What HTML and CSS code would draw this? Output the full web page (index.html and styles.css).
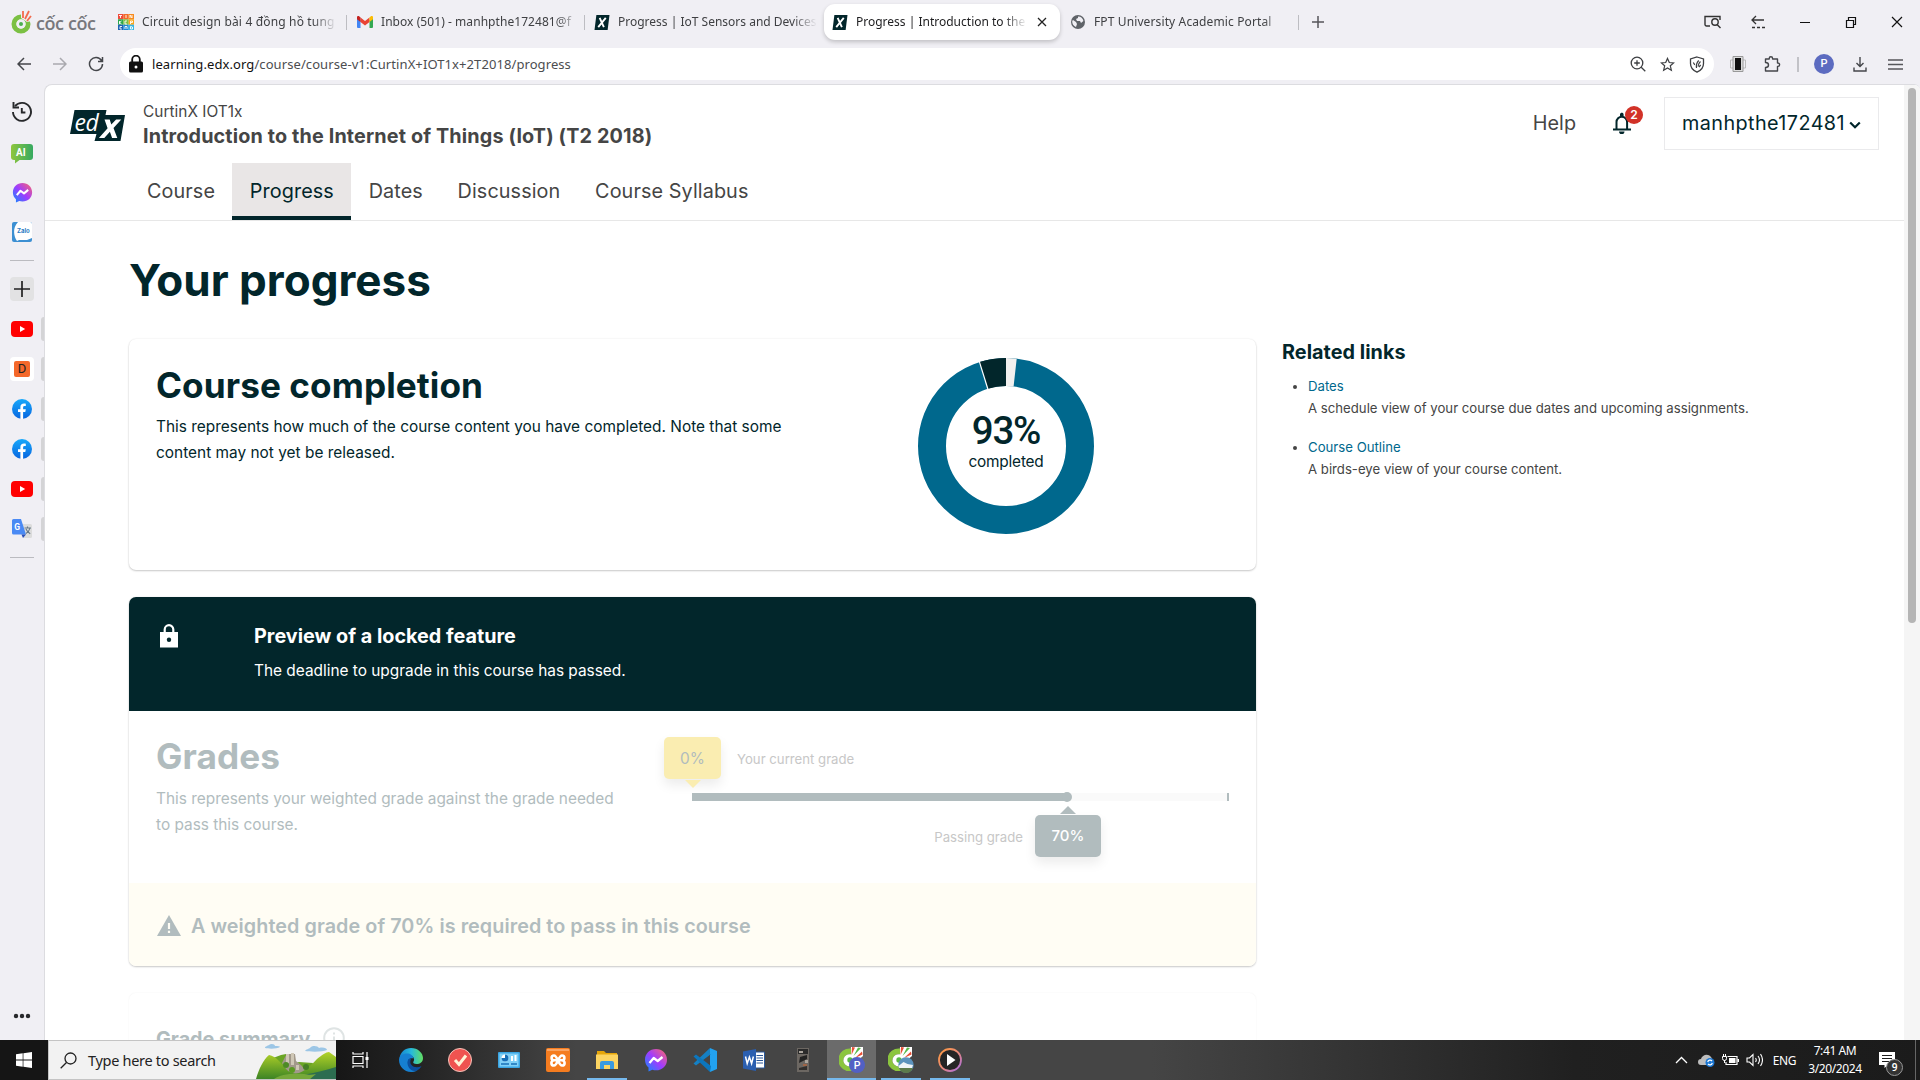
FILE: index.html
```html
<!DOCTYPE html>
<html lang="en">
<head>
<meta charset="utf-8">
<title>Progress | Introduction to the Internet of Things</title>
<link rel="stylesheet" href="styles.css">
</head>
<body>
<svg class="defs" width="0" height="0">
  <defs>
    <linearGradient id="msg" x1="0" y1="1" x2="1" y2="0"><stop offset="0" stop-color="#0a8dff"/><stop offset=".5" stop-color="#a03bff"/><stop offset="1" stop-color="#ff6968"/></linearGradient>
    <linearGradient id="fb" x1="0" y1="0" x2="0" y2="1"><stop offset="0" stop-color="#18a8fa"/><stop offset="1" stop-color="#0866e0"/></linearGradient>
    <linearGradient id="ai" x1="0" y1="0" x2="1" y2="0"><stop offset="0" stop-color="#8fc63d"/><stop offset="1" stop-color="#35a961"/></linearGradient>
    <linearGradient id="edge" x1="0" y1="0" x2="1" y2="0"><stop offset="0" stop-color="#1583cf"/><stop offset=".5" stop-color="#27b9dc"/><stop offset="1" stop-color="#62df62"/></linearGradient>
    <linearGradient id="hill" x1="0" y1="0" x2="0" y2="1"><stop offset="0" stop-color="#b4d327"/><stop offset="1" stop-color="#3c8425"/></linearGradient>
    <linearGradient id="play" x1="0" y1="0" x2="1" y2="1"><stop offset="0" stop-color="#ff9a3c"/><stop offset=".5" stop-color="#e98a78"/><stop offset="1" stop-color="#a66be8"/></linearGradient>
    <symbol id="i-msg" viewBox="0 0 24 24"><path fill="url(#msg)" d="M12 1C5.700 1 1 5.600 1 11.700c0 3.200 1.300 6 3.500 7.900V23.500l3.800-1.700c1.200.4 2.400.5 3.700.5 6.300 0 11-4.500 11-10.600S18.300 1 12 1z"/><path d="M5.500 15l4.200-5 4 3 4.800-4" fill="none" stroke="#fff" stroke-width="2.300" stroke-linejoin="round"/></symbol>
    <symbol id="i-yt" viewBox="0 0 22 16"><rect width="22" height="16" rx="4" fill="#f00"/><path d="M9 5l5.200 3L9 11z" fill="#fff"/></symbol>
    <symbol id="i-fb" viewBox="0 0 20 20"><circle cx="10" cy="10" r="10" fill="url(#fb)"/><path fill="#fff" d="M8.400 20v-7H6v-2.800h2.400V8.300c0-2.600 1.300-3.800 3.600-3.800.8 0 1.500.1 1.800.2v2.400h-1.200c-1.200 0-1.500.6-1.500 1.500v1.600h2.700L13.300 13h-2.200v7z"/></symbol>
    <symbol id="i-edxtab" viewBox="0 0 16 16"><path fill="#02262b" d="M2 0h14l-2 16H0z"/><path d="M5.500 3L10 13M12 3L4 13" stroke="#fff" stroke-width="2" fill="none"/></symbol>
    <symbol id="i-coc" viewBox="0 0 24 24"><path d="M12 0h12v9l-6 5-7-1z" fill="#fff"/><path d="M12 1.500a11.500 11.500 0 1 0 10 14h-6a6 6 0 1 1-4-8z" fill="#8bc53f"/><path d="M12 7.500a6 6 0 1 0 4 8l-2-3z" fill="#fff"/><circle cx="11" cy="13" r="2.700" fill="#59b947"/><path d="M12.500 8L13 0l3 .5z" fill="#e94f35"/><path d="M14.500 9L19 .5l3 .5z" fill="#59b947"/><path d="M16 11l7-6.500.5 3z" fill="#e94f35"/></symbol>
  </defs>
</svg>

<div class="screen">
  <div class="tabstrip">
    <div class="brand">
      <svg width="21" height="25" viewBox="0 0 21 25"><circle cx="10" cy="15" r="7" fill="none" stroke="#7bc043" stroke-width="5"/><circle cx="10" cy="15" r="4.700" fill="#f0eff4"/><circle cx="10" cy="15" r="2" fill="#4caf50"/><path d="M10 9V0h11v12l-5 1z" fill="#f0eff4"/><path d="M12 9V2M14 10l4-8M16 12l4-5" stroke="#f26b4e" stroke-width="1.800"/></svg>
      <span class="brand-name">cốc cốc</span>
    </div>
    <div class="tab tab-1">
      <svg width="16" height="16" viewBox="0 0 16 16"><path fill="#ef4b3c" d="M0 0h5.300v5.300H0z"/><path fill="#f26a2a" d="M5.300 0h5.400v5.300H5.300z"/><path fill="#f78b1f" d="M10.700 0H16v5.300h-5.300z"/><path fill="#2ba84a" d="M0 5.300h5.300v5.400H0z"/><path fill="#7cc142" d="M5.300 5.300h5.400v5.400H5.300z"/><path fill="#f9a51a" d="M10.700 5.300H16v5.400h-5.300z"/><path fill="#1c62b3" d="M0 10.700h5.300V16H0z"/><path fill="#1c87d3" d="M5.300 10.700h5.400V16H5.300z"/><path fill="#35b5e5" d="M10.700 10.700H16V16h-5.300z"/><path d="M1 1.500h3M2.500 1.500V4M8 1v3M12 4V1l2 3V1M1.500 7v3M3.500 7l-2 1.500 2 1.500M9 7H7v3h2M12.500 10V7h2v1.500h-2M4 12.500H2v2.500h2M7 15v-2.500h2V15M12.500 12.500v2.500h2v-2z" stroke="#fff" stroke-width=".9" fill="none"/></svg>
      <span class="tab-text">Circuit design bài 4 đồng hồ tung</span>
    </div>
    <div class="tab tab-2">
      <svg width="16" height="12" viewBox="0 0 16 12"><path fill="#4285f4" d="M0 1.500L3.500 4v8H1a1 1 0 0 1-1-1z"/><path fill="#34a853" d="M16 1.500L12.500 4v8H15a1 1 0 0 0 1-1z"/><path fill="#ea4335" d="M3.500 6V1.500L8 5l4.500-3.500V6L8 9.500z"/><path fill="#c5221f" d="M0 2.500V1.300C0 0 1.500-.3 2.400.5l1.100 1V6L0 3.300z"/><path fill="#fbbc04" d="M16 2.500V1.300c0-1.300-1.500-1.600-2.400-.8l-1.100 1V6L16 3.300z"/></svg>
      <span class="tab-text">Inbox (501) - manhpthe172481@f</span>
    </div>
    <div class="tab tab-3">
      <svg width="16" height="15"><use href="#i-edxtab"/></svg>
      <span class="tab-text">Progress | IoT Sensors and Devices</span>
    </div>
    <div class="tab tab-active">
      <svg width="16" height="15"><use href="#i-edxtab"/></svg>
      <span class="tab-text">Progress | Introduction to the</span>
      <svg class="tab-close" width="10" height="10" viewBox="0 0 10 10"><path d="M1 1l8 8M9 1L1 9" stroke="#222" stroke-width="1.300"/></svg>
    </div>
    <div class="tab tab-5">
      <svg width="14" height="14" viewBox="0 0 14 14"><circle cx="7" cy="7" r="7" fill="#5f6368"/><path d="M2 5l3 2 1 2-1 3c-2.500-1-4-3-3.800-6zM7 1.500c3 0 5 2 5.400 4.500L10 8 9 6H6l-1-2 2-1z" fill="#f0eff4"/></svg>
      <span class="tab-text">FPT University Academic Portal</span>
    </div>
    <svg class="newtab" width="12" height="12" viewBox="0 0 12 12"><path d="M6 0v12M0 6h12" stroke="#55565a" stroke-width="1.500"/></svg>
    <div class="window-buttons">
      <svg width="18" height="14" viewBox="0 0 18 14"><path d="M6 11H2.500A1.500 1.500 0 0 1 1 9.500v-8h15V5" fill="none" stroke="#333" stroke-width="1.400"/><circle cx="11" cy="7" r="3.200" fill="none" stroke="#333" stroke-width="1.400"/><path d="M13 9.500l3.500 3.500" stroke="#333" stroke-width="1.400"/></svg>
      <svg width="14" height="14" viewBox="0 0 14 14"><path d="M1 5h12M5 1L1 5l4 4" fill="none" stroke="#333" stroke-width="1.300"/><path d="M1 12.500h13" stroke="#333" stroke-width="1.300" stroke-dasharray="3 2"/></svg>
      <svg width="12" height="12" viewBox="0 0 12 12"><path d="M1 6.500h10" stroke="#111"/></svg>
      <svg width="12" height="12" viewBox="0 0 12 12"><path d="M1.500 4.500h7v7h-7zM3.500 4V1.500h7v7H9" fill="none" stroke="#111" stroke-width="1.200"/></svg>
      <svg width="12" height="12" viewBox="0 0 12 12"><path d="M1 1l10 10M11 1L1 11" stroke="#111" stroke-width="1.200"/></svg>
    </div>
  </div>

  <div class="toolbar">
    <div class="nav-icons">
      <svg width="14" height="14" viewBox="0 0 14 14"><path d="M14 7H1M7 1L1 7l6 6" fill="none" stroke="#44464a" stroke-width="1.500"/></svg>
      <svg width="14" height="14" viewBox="0 0 14 14"><path d="M0 7h13M7 1l6 6-6 6" fill="none" stroke="#a9a9ae" stroke-width="1.500"/></svg>
      <svg width="16" height="16" viewBox="0 0 16 16"><path d="M13.500 4.500A6.500 6.500 0 1 0 14.500 8M14.500 1v4.500H10" fill="none" stroke="#44464a" stroke-width="1.500"/></svg>
    </div>
    <div class="omnibox">
      <svg width="14" height="18" viewBox="0 0 14 18"><rect y="6.500" width="14" height="11" rx="1.500" fill="#111"/><path d="M3.200 7V4.500a3.800 3.800 0 0 1 7.600 0V7" fill="none" stroke="#111" stroke-width="1.800"/><circle cx="7" cy="12" r="1.500" fill="#fff"/></svg>
      <span class="url"><b>learning.edx.org</b>/course/course-v1:CurtinX+IOT1x+2T2018/progress</span>
      <div class="omni-actions">
        <svg width="16" height="16" viewBox="0 0 16 16" fill="none" stroke="#3d3f42" stroke-width="1.300"><circle cx="7" cy="7" r="5.800"/><path d="M11.200 11.200L15.300 15.300M7 4.200v5.600M4.200 7h5.600"/></svg>
        <svg width="15" height="15" viewBox="0 0 16 16"><path d="M8 1.500l1.900 4.400 4.700.4-3.600 3.100 1.100 4.700L8 11.600l-4.100 2.500L5 9.400 1.400 6.300l4.700-.4z" fill="none" stroke="#3d3f42" stroke-width="1.300"/></svg>
        <svg width="16" height="17" viewBox="0 0 16 17"><path d="M8 1l6.500 2v4.500c0 4-2.500 7-6.500 8.700-4-1.700-6.500-4.700-6.500-8.700V3z" fill="none" stroke="#3d3f42" stroke-width="1.300"/><path d="M4.300 6.500l1.500 2.300M7.500 12c-.5-3 .3-5.500 2.200-7.500M9 10.500c.2-2 1-3.700 2.500-5M10 11l1.700-2" stroke="#3d3f42" stroke-width="1.200" fill="none"/></svg>
      </div>
    </div>
    <div class="ext-icons">
      <svg width="16" height="16" viewBox="0 0 16 16"><path d="M.5 4v8h15V4z" fill="none" stroke="#bbb"/><path d="M3 .5h10v15H3z" fill="#ddd" stroke="#999"/><path d="M5 2h6v12H5z" fill="#111"/></svg>
      <svg width="17" height="16" viewBox="0 0 17 16"><path d="M1.500 3h3.700V2.500a1.700 1.700 0 0 1 3.400 0V3h4.900v4h.4a1.700 1.700 0 0 1 0 3.400h-.4V15h-12v-3.500c2.200 0 3-1.200 3-2.500s-.8-2.500-3-2.500z" fill="none" stroke="#44464a" stroke-width="1.400" stroke-linejoin="round"/></svg>
      <i class="bar"></i>
      <span class="avatar">P</span>
      <svg width="14" height="15" viewBox="0 0 14 15"><path d="M7 0v9M3.500 6L7 9.500 10.500 6M1 10.500V14h12v-3.500" fill="none" stroke="#44464a" stroke-width="1.400"/></svg>
      <svg width="15" height="11" viewBox="0 0 15 11"><path d="M0 1h15M0 5.500h15M0 10h15" stroke="#55565a" stroke-width="1.400"/></svg>
    </div>
  </div>

  <div class="workspace">
    <div class="side">
      <div class="side-item"><svg width="22" height="22" viewBox="0 0 22 22" fill="none" stroke="#27282b" stroke-width="1.900"><path d="M4 5.200A9 9 0 1 1 2 11"/><path d="M2.500 1v5.500H8"/><path d="M10.800 7v4.500h3.600"/></svg></div>
      <div class="side-item ai"><svg width="22" height="20" viewBox="0 0 22 20"><path fill="url(#ai)" d="M3 0h16a3 3 0 0 1 3 3v10a3 3 0 0 1-3 3H8.500L4 19.500V16H3a3 3 0 0 1-3-3V3a3 3 0 0 1 3-3z"/><text x="5" y="12" class="ai-label">AI</text></svg></div>
      <div class="side-item"><svg width="21" height="21"><use href="#i-msg"/></svg></div>
      <div class="side-item"><svg width="20" height="20" viewBox="0 0 20 20"><rect width="20" height="20" rx="2" fill="#3c8fd2"/><path d="M6 0h12a2 2 0 0 1 2 2v14l-5 2H7l-2 1C2 15 0 6 6 0z" fill="#fff"/><text x="5" y="11" class="zalo-label">Zalo</text></svg></div>
      <hr class="side-line">
      <div class="side-item add"><span class="plus-box"><svg width="16" height="16" viewBox="0 0 16 16"><path d="M8 0v16M0 8h16" stroke="#222" stroke-width="1.700"/></svg></span></div>
      <div class="side-item open"><svg width="22" height="16"><use href="#i-yt"/></svg></div>
      <div class="side-item open"><span class="d-tile"><span>D</span></span></div>
      <div class="side-item open"><svg width="20" height="20"><use href="#i-fb"/></svg></div>
      <div class="side-item open"><svg width="20" height="20"><use href="#i-fb"/></svg></div>
      <div class="side-item open"><svg width="22" height="16"><use href="#i-yt"/></svg></div>
      <div class="side-item open"><svg width="20" height="20" viewBox="0 0 20 20"><path d="M8 5h10.500a1.500 1.500 0 0 1 1.500 1.500v11a1.500 1.500 0 0 1-1.500 1.500H12z" fill="#dcdcdc"/><path d="M1.500 0H9l5 15.500H1.500A1.500 1.500 0 0 1 0 14V1.500A1.500 1.500 0 0 1 1.500 0z" fill="#4a8af4"/><path d="M9.500 15.500H14L11 19z" fill="#2a4fb5"/><path d="M12.500 9H19M15.500 7.500V9M18 9c-.5 2.500-2 4-4 5.500M14 10c.8 2 2.200 3.500 4.200 4.800" stroke="#687a88" stroke-width="1.100" fill="none"/><text x="2.200" y="11" class="g-label">G</text></svg></div>
      <hr class="side-line last">
      <svg class="dots" width="18" height="6" viewBox="0 0 18 6"><circle cx="3" cy="3" r="2.200"/><circle cx="9" cy="3" r="2.200"/><circle cx="15" cy="3" r="2.200"/></svg>
    </div>

    <div class="page">
      <div class="viewport">
        <header class="site-header">
          <div class="header-top">
            <svg class="logo" width="55" height="31" viewBox="0 0 55 31"><path fill="#02262b" d="M4.500 0H36.500L35.500 5H55L50.500 31H24.500L26.500 24H0z"/><text x="4.500" y="21" class="logo-ed">ed</text><path d="M34.500 9.500h5.200l1.600 5 4.800-5h5.200L43.500 18l3.800 10h-5.200l-2.200-6.200-5.600 6.200h-5.400l8.700-9.800z" fill="#fff"/></svg>
            <div class="course-id"><span class="org">CurtinX IOT1x</span><span class="course-name">Introduction to the Internet of Things (IoT) (T2 2018)</span></div>
            <span class="help">Help</span>
            <span class="bell"><svg width="20" height="22" viewBox="0 0 20 22"><path d="M4.500 17V10a5.300 5.300 0 0 1 10.600 0v7M1 17.500h18" fill="none" stroke="#02262b" stroke-width="2"/><path d="M8 2.500C8 0 11.600 0 11.600 2.500v2H8zM7 19.500h5.500a2.700 2.700 0 0 1-5.500 0z" fill="#02262b"/></svg><span class="badge">2</span></span>
            <span class="user"><span class="user-name">manhpthe172481</span><svg width="12" height="8" viewBox="0 0 12 8"><path d="M1.200 1.500L6 6.300l4.800-4.800" fill="none" stroke="#02262b" stroke-width="2.200"/></svg></span>
          </div>
          <nav class="course-nav"><a>Course</a><a class="current">Progress</a><a>Dates</a><a>Discussion</a><a>Course Syllabus</a></nav>
        </header>
        <main>
          <h1>Your progress</h1>
          <div class="columns">
            <div class="main-col">
              <section class="card completion">
                <div class="copy">
                  <h2>Course completion</h2>
                  <p>This represents how much of the course content you have completed. Note that some<br>content may not yet be released.</p>
                </div>
                <svg class="donut" width="178" height="178" viewBox="-89 -89 178 178">
                  <circle r="74" fill="none" stroke="#00688d" stroke-width="28"/>
                  <path d="M0-88A88 88 0 0 1 10.700-87.350L7.600-59.500A60 60 0 0 0 0-60z" fill="#f2f0ef"/>
                  <path d="M-26.500-83.900A88 88 0 0 1 0-88V-60A60 60 0 0 0-18-57.200z" fill="#02262b"/>
                  <path d="M-26.800-84.900L-18-56.500" stroke="#fff" stroke-width="1.200"/>
                  <text class="pct" x="0" y="-2" text-anchor="middle">93%</text>
                  <text class="pct-label" y="21" text-anchor="middle">completed</text>
                </svg>
              </section>
              <section class="card grades">
                <div class="locked">
                  <svg width="18" height="24" viewBox="0 0 18 24"><path d="M0 8h18v15.500H0z" fill="#fff"/><path d="M4.700 8.500V5.500a4.300 4.300 0 0 1 8.600 0v3" fill="none" stroke="#fff" stroke-width="2.200"/><circle cx="9" cy="15.700" r="2.200" fill="#02262b"/></svg>
                  <div><h3>Preview of a locked feature</h3><p>The deadline to upgrade in this course has passed.</p></div>
                </div>
                <div class="grade-body">
                  <div class="copy">
                    <h2>Grades</h2>
                    <p>This represents your weighted grade against the grade needed<br>to pass this course.</p>
                  </div>
                  <div class="chart">
                    <div class="chart-top"><span class="bubble current-bubble">0%</span><span class="chart-label">Your current grade</span></div>
                    <div class="track"><div class="passing" style="width:70%"></div></div>
                    <div class="chart-bottom"><span class="chart-label">Passing grade</span><span class="bubble pass-bubble">70%</span></div>
                  </div>
                </div>
                <div class="notice">
                  <svg width="24" height="21" viewBox="0 0 24 21"><path d="M12 0l12 21H0z" fill="#b1bcbe"/><path d="M10.900 8h2.200v6h-2.200zM10.900 15.800h2.200V18h-2.200z" fill="#fffdf4"/></svg>
                  <span>A weighted grade of 70% is required to pass in this course</span>
                </div>
              </section>
              <section class="card summary"><h3>Grade summary</h3><svg width="22" height="22" viewBox="0 0 22 22"><circle cx="11" cy="11" r="9.800" fill="none" stroke="#dfe4e4" stroke-width="2"/><path d="M10 5.500h2v2h-2zM10 9.500h2v6h-2z" fill="#dfe4e4"/></svg></section>
            </div>
            <aside class="related">
              <h3>Related links</h3>
              <ul>
                <li><a>Dates</a><p>A schedule view of your course due dates and upcoming assignments.</p></li>
                <li><a>Course Outline</a><p>A birds-eye view of your course content.</p></li>
              </ul>
            </aside>
          </div>
        </main>
      </div>
      <div class="scrollbar"><div class="thumb"></div></div>
    </div>
  </div>

  <div class="taskbar">
    <div class="start"><svg width="16" height="16" viewBox="0 0 16 16"><path fill="#fff" d="M0 2.200L6.700 1.300V7.600H0zM7.400 1.200L16 0v7.600H7.400zM0 8.400h6.700v6.300L0 13.800zM7.400 8.400H16V16l-8.600-1.200z"/></svg></div>
    <div class="search">
      <svg width="17" height="17" viewBox="0 0 17 17"><circle cx="10.500" cy="6.500" r="5.500" fill="none" stroke="#222" stroke-width="1.300"/><path d="M6.500 10.500L.7 16.300" stroke="#222" stroke-width="1.300"/></svg>
      <span>Type here to search</span>
      <svg class="scene" width="80" height="38" viewBox="0 0 80 38"><path d="M9 7c0-2 3-2 4-3 2-2 6-1 6 1 3 0 5 0 5 1-3 2-11 2-15 1zM49 10c1-2 4-2 5-3 2-3 8-2 9 0 4-1 8 0 8 2-4 2-16 2-22 1z" fill="#9cc6e6"/><path d="M17 17l8-3 5-1v8l5 2 8-2 14 1-4 12H24z" fill="#6aa524"/><path d="M26 22l3-6 2-3h8l1 7 5 4 4 5 4 4H32z" fill="#a2998b"/><path d="M30 13h3v9h-3zM35 12h3v12h-3zM40 24h3v5h-3z" fill="#cfc7b6"/><path d="M0 38C3 28 7 19 13 14c7 1 13 9 18 15 3 3 8 4 12 3 8-3 13-9 18-14 5-4 9-7 12-7l7 5v22z" fill="url(#hill)"/><path d="M24 38c14-2 36-6 56-12v12z" fill="#2c6d50"/><path d="M18 38c6-5 18-6 30-5 5 1 8 1 12 0l-6 5z" fill="#76a83a"/><circle cx="30" cy="24" r="3" fill="#4d8b25"/><circle cx="36" cy="29" r="3" fill="#5b9a22"/><circle cx="50" cy="26" r="3" fill="#467f24"/></svg>
    </div>
    <div class="apps">
      <div class="app"><svg width="17" height="16" viewBox="0 0 17 16" fill="none" stroke="#fff" stroke-width="1.200"><path d="M1 4.500h10v7H1zM1 0v2h10V0M1 16v-2h10v2M15 0v16"/><path d="M13.500 5h3v3h-3z" fill="#fff" stroke="none"/></svg></div>
      <div class="app"><svg width="24" height="24" viewBox="0 0 24 24"><path d="M.5 10C1.500 4 6 0 12 0c7 0 12 5 12 10 0 4-3 6-6.500 6-2.500 0-4-1-3-2.500 1.500-2.500 0-6-4.500-6-4 0-7 1-9.500 2.500z" fill="url(#edge)"/><path d="M0 12c0-4 4-6.500 8-6.500 3.500 0 6 2 6.500 5-6-2-8 6-2 10 3 2 5 2 6 2C16 23.500 14 24 12 24 5 24 0 18 0 12z" fill="#1680d2"/><path d="M9 12c-2 5 2 12 8 11 2.500-1 4.500-3 5.500-5-3.500 2-8 1.500-10-1C11 15.500 11 13 12 11c-1.500-.5-2.500 0-3 1z" fill="#0c4f9e"/></svg></div>
      <div class="app"><svg width="24" height="24" viewBox="0 0 24 24"><circle cx="12" cy="12" r="11.500" fill="#ef5350" stroke="#f2c6bd"/><path d="M7 12l4 4.500L18 7.500" fill="none" stroke="#fff3d6" stroke-width="3"/></svg></div>
      <div class="app"><svg width="22" height="16" viewBox="0 0 22 16"><rect width="22" height="16" rx="1" fill="#3aa5e3"/><rect x="1.500" y="1.500" width="19" height="13" fill="#7fd0f7"/><circle cx="7" cy="6" r="3.500" fill="#fff"/><path d="M7 2.500a3.500 3.500 0 1 1-3.500 3.500H7z" fill="#1870b8"/><path d="M13 4h2v5h-2zM16.500 3h2v6h-2z" fill="#fff"/><path d="M3 12h8M13 12h6" stroke="#1870b8" stroke-width="1.500"/></svg></div>
      <div class="app"><svg width="24" height="24" viewBox="0 0 24 24"><rect width="24" height="24" rx="2" fill="#f57c1f"/><path d="M1 2h22" stroke="#fbb27a" stroke-width="1.500"/><path d="M8 7.500a2.400 2.400 0 0 0 0 4.800h8a2.400 2.400 0 0 0 0-4.800c-3.500 0-4.500 10-8 10a2.600 2.600 0 0 1 0-5.200M8 7.500c3.500 0 4.500 10 8 10a2.600 2.600 0 0 0 0-5.200" fill="none" stroke="#fff" stroke-width="2.600"/></svg></div>
      <div class="app running"><svg width="22" height="18" viewBox="0 0 22 18"><path d="M1 0h7l2 2h11v16H1z" fill="#e5a50a"/><path d="M0 3.500h22V18H0z" fill="#fcd462"/><path d="M4 18v-6a2 2 0 0 1 2-2h10a2 2 0 0 1 2 2v6h-4v-4H8v4z" fill="#3a9ae0"/></svg></div>
      <div class="app"><svg width="24" height="24"><use href="#i-msg"/></svg></div>
      <div class="app"><svg width="24" height="24" viewBox="0 0 24 24"><path d="M17 0l7 3v18l-7 3z" fill="#22a2f0"/><path d="M18 6L3 17.500.5 15.500 17 0v6z" fill="#1580c4"/><path d="M18 18L3 6.500.5 8.500 17 24z" fill="#0c76bd"/></svg></div>
      <div class="app"><svg width="22" height="22" viewBox="0 0 22 22"><path d="M11 3h10.500v16H11z" fill="#fff" stroke="#2b5797"/><path d="M13.500 6.500H20M13.500 9H20M13.500 11.500H20M13.500 14H20" stroke="#2b5797"/><path d="M0 2.500L13 0v22L0 19.500z" fill="#2b5fb0"/><path d="M2.500 7.500l1.700 7 2.200-6.500 2.200 6.500 1.800-7" fill="none" stroke="#fff" stroke-width="1.500"/></svg></div>
      <div class="app"><svg width="12" height="24" viewBox="0 0 12 24"><path d="M0 0h12v24H0z" fill="#6c6762"/><path d="M1 1h10v5H1z" fill="#2b2b2b"/><path d="M3 9l7-2v4L2 15z" fill="#222"/><path d="M2 3h4v2H2zM8 12h3v3H8z" fill="#aaa49c"/><path d="M6 17h4" stroke="#d2652d"/><path d="M2 20l8-2v4H2z" fill="#312e2c"/></svg></div>
      <div class="app focused running"><svg width="26" height="26" viewBox="0 0 26 26"><use href="#i-coc" width="24" height="24"/><circle cx="18" cy="18" r="8" fill="#5260c4"/><text x="14.700" y="21.800" class="p-label">P</text></svg></div>
      <div class="app running"><svg width="26" height="26" viewBox="0 0 26 26"><use href="#i-coc" width="24" height="24"/><circle cx="18" cy="18" r="7.700" fill="#5b93bd"/><path d="M10.500 19l5-4 4 2 5.500 1-1 3H11z" fill="#eef4f7"/><path d="M11 21h14c-2 4-4 5-7 5s-6-2-7-5z" fill="#5c7b4c"/></svg></div>
      <div class="app running"><svg width="24" height="24" viewBox="0 0 24 24"><circle cx="12" cy="12" r="11" fill="#252525" stroke="url(#play)" stroke-width="1.800"/><path d="M9 6l8.500 6L9 18z" fill="#fff"/></svg></div>
    </div>
    <div class="tray">
      <svg class="t-chev" width="13" height="8" viewBox="0 0 13 8"><path d="M1 7l5.500-5.500L12 7" fill="none" stroke="#fff" stroke-width="1.300"/></svg>
      <svg class="t-cloud" width="17" height="14" viewBox="0 0 17 14"><path d="M3 12a3 3 0 0 1 0-6C4 2 10 0 13 4l2 3v5z" fill="#bdbdbd"/><circle cx="12" cy="9.500" r="4.500" fill="#1c78d4"/><path d="M9.700 9a2.500 2.500 0 0 1 4.300-1M14.300 10a2.500 2.500 0 0 1-4.300 1" stroke="#fff" fill="none" stroke-width="1.200"/></svg>
      <svg class="t-batt" width="17" height="12" viewBox="0 0 17 12"><path d="M5.500 2.500h9.500v8H4V8" fill="none" stroke="#fff" stroke-width="1.200"/><path d="M7 4h6.500v5H7zM15.500 5H17v3h-1.500z" fill="#fff"/><path d="M.5 2.500h4v2a2 2 0 0 1-4 0zM1.500 0v2M3.500 0v2M2.500 6v3" stroke="#fff" fill="none"/></svg>
      <svg class="t-vol" width="17" height="14" viewBox="0 0 17 14"><path d="M1 5h2.500L7 1.500v11L3.500 9H1zM9.500 5q1.500 2 0 4M12 3q3 4 0 8M14.500 1q4 6 0 12" fill="none" stroke="#fff" stroke-width="1.100"/></svg>
      <span class="lang">ENG</span>
      <div class="clock"><span>7:41 AM</span><span>3/20/2024</span></div>
      <div class="notif"><svg width="16" height="16" viewBox="0 0 16 16"><path d="M0 0h16v13H9l-3.500 3v-3H0z" fill="#fff"/><path d="M3 3.500h10M3 6.500h10M3 9.500h7" stroke="#1c1c1c"/></svg><span class="count">9</span></div>
      <i class="peek"></i>
    </div>
  </div>
</div>
</body>
</html>
```
FILE: styles.css
```css
* { box-sizing: border-box; }
body { margin: 0; font-family: Inter, "Liberation Sans", sans-serif; color: #02262b; overflow: hidden; }
h1, h2, h3, p, ul { margin: 0; padding: 0; }
svg { flex: none; display: block; }
.defs { position: absolute; }
.screen { width: 1920px; height: 1080px; display: flex; flex-direction: column; background: #f0eff4; }

/* tab strip */
.tabstrip { height: 44px; flex: none; display: flex; align-items: center; font: 12px "Noto Sans", "Open Sans", sans-serif; color: #3f4043; }
.brand { display: flex; align-items: center; gap: 4px; padding-left: 11px; width: 113px; }
.brand svg { margin-bottom: 2px; }
.brand-name { font: 600 18px "Open Sans", sans-serif; color: #77787c; letter-spacing: -.4px; white-space: nowrap; padding-top: 1px; }
.tab { height: 36px; display: flex; align-items: center; gap: 8px; flex: none; position: relative; }
.tab::after { content: ""; position: absolute; right: 0; top: 11px; width: 1px; height: 15px; background: #bdbdc2; }
.tab-text { flex: 1; overflow: hidden; white-space: nowrap; padding-bottom: 2px; letter-spacing: .12px; -webkit-mask-image: linear-gradient(90deg, #000 calc(100% - 24px), transparent); mask-image: linear-gradient(90deg, #000 calc(100% - 24px), transparent); }
.tab-1 { width: 234px; padding: 0 10px 0 5px; }
.tab-1 .tab-text { letter-spacing: .16px; }
.tab-2 { width: 238px; padding: 0 5px 0 10px; }
.tab-2 .tab-text { letter-spacing: .06px; }
.tab-3 { width: 239px; padding: 0 7px 0 9px; }
.tab-3 .tab-text { letter-spacing: 0; }
.tab-3::after, .tab-active::after { display: none; }
.tab-active { width: 236px; padding: 0 13px 0 8px; background: #fff; border-radius: 11px; box-shadow: 0 2px 4px rgba(0,0,0,.2); color: #1d1d1f; }
.tab-active .tab-text { letter-spacing: 0; }
.tab-close { margin-left: 2px; }
.tab-5 { width: 239px; padding: 0 12px 0 11px; }
.tab-5 .tab-text { margin-left: 1px; }
.newtab { margin-left: 13px; }
.window-buttons { margin-left: auto; display: flex; align-items: center; padding-right: 17px; gap: 34px; }
.window-buttons svg:nth-child(1) { margin-right: -5px; }

/* toolbar */
.toolbar { height: 40px; flex: none; display: flex; align-items: center; }
.nav-icons { width: 120px; display: flex; align-items: center; gap: 21.500px; padding-left: 17px; }
.omnibox { width: 1594px; height: 32px; border-radius: 16px; background: #fff; display: flex; align-items: center; padding: 0 9px; gap: 9px; }
.url { font: 13px "Noto Sans", "Open Sans", sans-serif; color: #4c4d50; letter-spacing: .085px; }
.url b { font-weight: 400; color: #111; }
.omni-actions { margin-left: auto; display: flex; align-items: center; gap: 14px; }
.ext-icons { display: flex; align-items: center; padding-left: 16px; }
.ext-icons .bar { width: 2px; height: 15px; background: #c2c2c7; margin: 0 15px 0 16px; }
.ext-icons svg:nth-child(2) { margin-left: 18px; }
.avatar { width: 20px; height: 20px; border-radius: 50%; background: #5c6bc0; color: #fff; font: 500 11px/20px Roboto, sans-serif; text-align: center; margin-right: 19px; }
.ext-icons svg:last-child { margin-left: 21px; }

/* left rail */
.workspace { flex: 1; min-height: 0; display: flex; }
.side { width: 44px; flex: none; display: flex; flex-direction: column; padding-top: 8px; }
.side-item { height: 40px; display: flex; align-items: center; justify-content: center; flex: none; position: relative; }
.side-item.ai { padding-top: 3px; }
.side-item.open::after { content: ""; position: absolute; right: 0; top: 8px; width: 3px; height: 24px; background: #d4d4d6; border-radius: 3px 0 0 3px; }
.side-line { width: 24px; height: 1px; border: 0; background: #bbbbc0; margin: 8px 10px; flex: none; }
.side-line.last { margin: 8px 10px; }
.plus-box { width: 24px; height: 24px; border-radius: 4px; background: #e2e2e3; display: grid; place-items: center; }
.d-tile { width: 24px; height: 24px; border-radius: 4px; background: #fff; display: grid; place-items: center; }
.d-tile span { width: 16px; height: 16px; border-radius: 2px; background: #f4682a; font: 13px/16px Roboto, sans-serif; text-align: center; color: #222; }
.dots { margin: auto auto 21px 13px; fill: #27282b; }
.ai-label { font: 700 10px Roboto, sans-serif; fill: #fff; }
.zalo-label { font: 700 6px Inter, sans-serif; fill: #2b7dc4; }
.g-label { font: 700 8.500px Roboto, sans-serif; fill: #fff; }
.p-label { font: 500 10.500px Roboto, sans-serif; fill: #fff; }

/* page */
.page { flex: 1; min-width: 0; display: flex; background: #fff; border-top: 1px solid #dcdce0; border-left: 1px solid #dcdce0; border-radius: 8px 6px 0 0; overflow: hidden; }
.viewport { width: 1859px; overflow: hidden; }
.scrollbar { width: 16px; background: #f5f5f5; padding: 3px 4px; }
.thumb { width: 8px; height: 535px; border-radius: 4px; background: #b5b5b5; }
.site-header { height: 136px; border-bottom: 1px solid #e7e7e7; }
.header-top { height: 78px; display: flex; align-items: center; padding: 0 25px 2px 25px; }
.logo { margin-top: 5px; }
.logo-ed { font: italic 400 23px "Open Sans", sans-serif; fill: #fff; letter-spacing: -.5px; }
.course-id { margin: 0 auto 0 18px; display: flex; flex-direction: column; color: #454545; }
.org { font-size: 15.400px; line-height: 25px; letter-spacing: .03px; }
.course-name { font-size: 19.800px; line-height: 24px; font-weight: 700; letter-spacing: .14px; }
.help { font-size: 19.800px; color: #454545; margin-right: 36px; }
.bell { position: relative; width: 20px; margin-right: 32px; }
.badge { position: absolute; left: 13px; top: -6px; width: 18px; height: 18px; border-radius: 50%; background: #d23228; color: #fff; font-size: 12px; font-weight: 600; line-height: 18px; text-align: center; }
.user { width: 215px; height: 53px; margin-top: 1px; border: 1px solid #eaeaec; display: flex; align-items: center; justify-content: center; gap: 4px; font-size: 19.800px; }
.user-name { letter-spacing: .43px; padding-bottom: 2px; }
.user svg { margin-top: 2px; }
.course-nav { display: flex; height: 57px; padding-left: 84px; font-size: 19.800px; letter-spacing: .1px; color: #454545; }
.course-nav a { padding: 0 17.400px; line-height: 56px; white-space: nowrap; }
.course-nav a:first-child { padding-left: 18px; }
.course-nav .current { background: #e9e6e6; border-bottom: 4px solid #02262b; color: #02262b; }
main { padding: 28px 0 0 84px; }
h1 { font-size: 44px; line-height: 62px; font-weight: 700; }
.columns { display: flex; gap: 26px; margin-top: 28px; align-items: flex-start; }
.main-col { width: 1127px; display: flex; flex-direction: column; gap: 27px; }
.card { border-radius: 7px; box-shadow: 0 1px 2px rgba(0,0,0,.2), 0 0 2px rgba(0,0,0,.08); background: #fff; overflow: hidden; }
h2 { font-size: 35.200px; line-height: 44px; font-weight: 700; letter-spacing: .07px; }
.copy p { font-size: 15.400px; line-height: 26px; white-space: nowrap; }
.completion { height: 231px; display: flex; padding: 18px 26px 0 27px; }
.completion .copy { width: 761px; padding-top: 6px; }
.completion .copy p { margin-top: 7px; letter-spacing: .015px; }
.pct { font: 500 38.500px Roboto, sans-serif; fill: #02262b; letter-spacing: -1.200px; }
.pct-label { font: 15.400px Inter, sans-serif; fill: #02262b; letter-spacing: -.2px; }
.locked { height: 114px; background: #02262b; color: #fff; display: flex; padding: 27px 31px; gap: 76px; }
.locked h3 { font-size: 19.800px; line-height: 24px; }
.locked p { font-size: 15.400px; line-height: 26px; margin-top: 10px; }
.grades { height: 369px; }
.grade-body { height: 172px; padding: 23px 26px 0 27px; display: flex; color: #b1bcbe; }
.grade-body .copy { width: 508px; }
.grade-body .copy p { margin-top: 8px; }
.chart { width: 566px; padding-top: 1px; }
.chart-top { display: flex; align-items: center; gap: 16px; height: 46px; padding-bottom: 4px; margin-top: 2px; }
.chart-label { font-size: 13.200px; color: #c7c7c7; padding-top: 2px; }
.bubble { height: 42px; border-radius: 5px; display: grid; place-items: center; font-size: 15.400px; position: relative; box-shadow: 0 6px 12px rgba(0,0,0,.08); }
.bubble::after { content: ""; position: absolute; left: 50%; margin-left: -8px; border: 8px solid transparent; }
.current-bubble { width: 57px; background: #faedb1; }
.current-bubble::after { top: 43px; border-top-color: #faedb1; border-bottom: 0; }
.pass-bubble { width: 66px; background: #b1bcbe; color: #fff; font-weight: 500; font-size: 15px; padding-bottom: 1px; }
.pass-bubble::after { bottom: 43px; border-bottom-color: #b1bcbe; border-top: 0; }
.track { margin: 10px 0 14px 28px; width: 537px; height: 8px; background: #fafafa; border-right: 2px solid #b1bcbe; }
.passing { height: 8px; background: #b1bcbe; position: relative; }
.passing::after { content: ""; position: absolute; right: -5px; top: -1px; width: 10px; height: 10px; border-radius: 50%; background: #b1bcbe; }
.chart-bottom { display: flex; align-items: center; justify-content: flex-end; gap: 12px; padding-right: 129px; }
.notice { height: 83px; background: #fffdf4; display: flex; align-items: center; padding: 2px 28px 0; gap: 10px; font-size: 19.800px; letter-spacing: .06px; font-weight: 600; color: #b1bcbe; }
.summary { height: 260px; padding: 34px 27px; display: flex; gap: 13px; box-shadow: 0 0 2px rgba(0,0,0,.06); }
.summary h3 { font-size: 19.800px; line-height: 24px; color: #b1bcbe; }
.related h3 { font-size: 19.800px; line-height: 24px; padding-top: 1px; letter-spacing: .05px; }
.related ul { padding-left: 26px; margin-top: 11px; font-size: 13.200px; line-height: 22px; }
.related li { margin-bottom: 17px; color: #454545; }
.related a { color: #00688d; }

/* taskbar */
.taskbar { height: 40px; flex: none; display: flex; background: linear-gradient(90deg, #151515 17%, #242424 22%, #454545 30%, #454545 60%, #202020 82%, #1b1b1b); color: #fff; font-family: "Noto Sans", "Open Sans", sans-serif; }
.start { width: 48px; display: grid; place-items: center; }
.search { width: 288px; background: #f2f2f2; border: 1px solid #c4c4c4; border-right: 0; display: flex; align-items: center; padding-left: 11px; color: #222; font-size: 14.500px; letter-spacing: -.3px; }
.search span { margin-left: 11px; }
.scene { margin-left: auto; }
.apps { display: flex; }
.app { width: 49px; display: grid; place-items: center; position: relative; }
.app:nth-child(n+2) { left: 1px; }
.app.running::after { content: ""; position: absolute; left: 5px; right: 4px; bottom: 0; height: 2px; background: #76b9ed; }
.app.focused { background: #6b6b6b; }
.app.focused::after { left: 0; right: 0; }
.tray { margin-left: auto; display: flex; align-items: center; font-size: 12px; }
.t-cloud { margin-left: 10px; }
.t-batt { margin-left: 7px; }
.t-vol { margin-left: 7px; }
.lang { margin-left: 10px; letter-spacing: -.4px; }
.clock { display: flex; flex-direction: column; align-items: center; line-height: 18px; width: 52px; margin-left: 13px; letter-spacing: -.4px; white-space: nowrap; }
.notif { position: relative; margin-left: 18px; }
.count { position: absolute; left: 7px; top: 7px; width: 17px; height: 17px; border-radius: 50%; background: #333; border: 1px solid #999; font-size: 10px; font-weight: 600; line-height: 15px; text-align: center; }
.peek { width: 1px; height: 40px; background: #666; margin: 0 4px 0 20px; }
```
